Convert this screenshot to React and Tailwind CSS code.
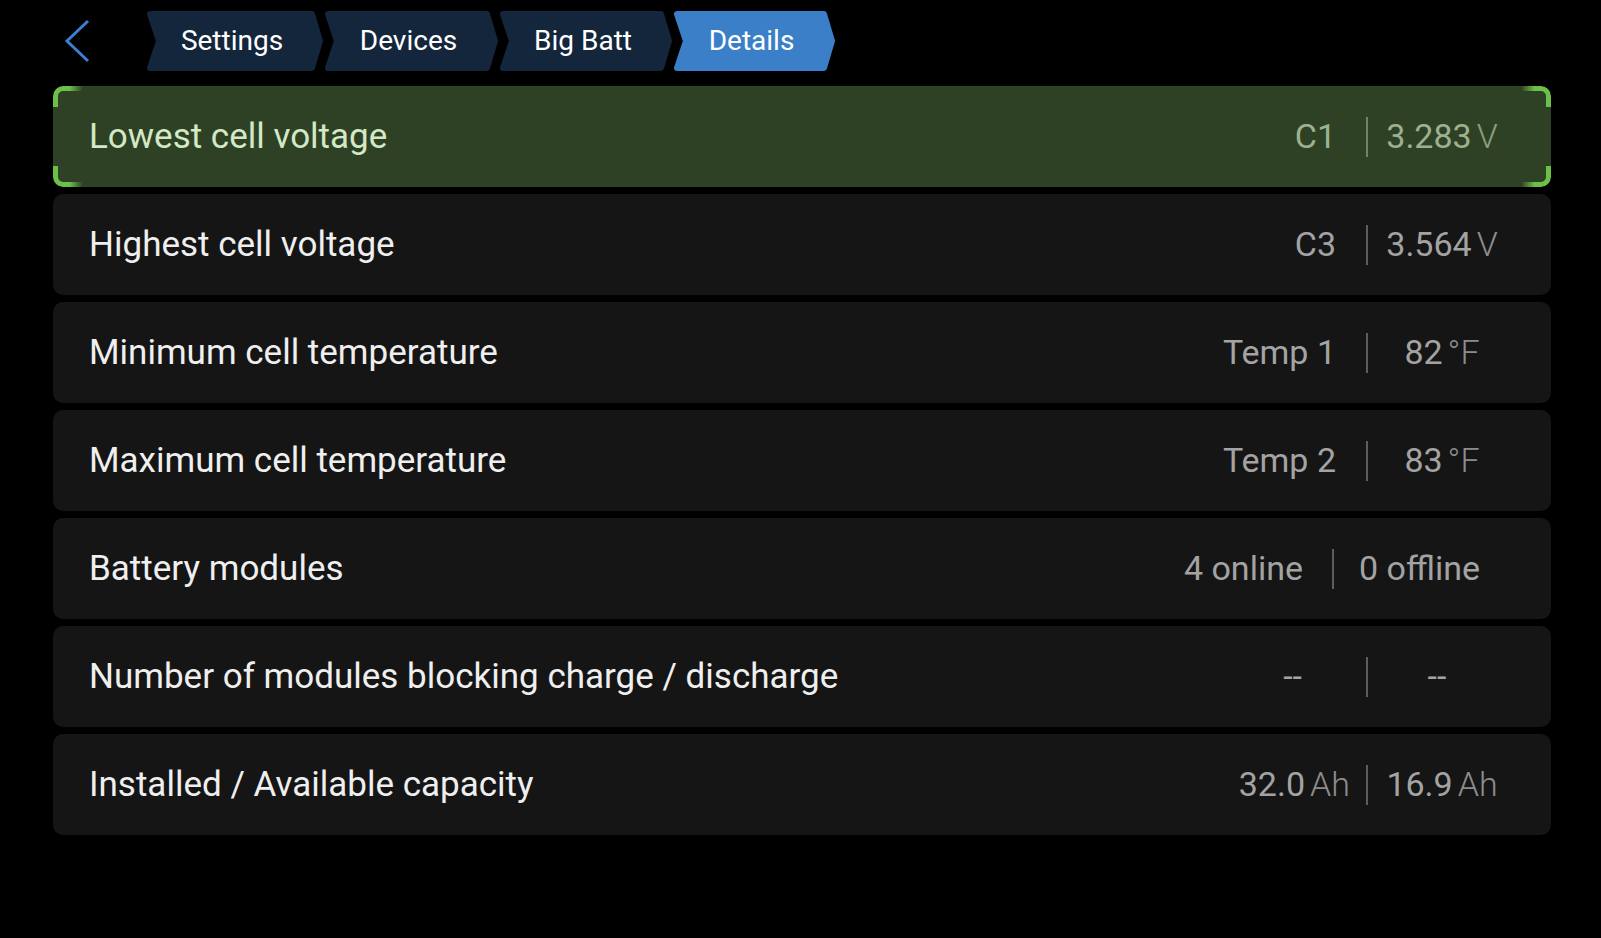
const crumbs = [
  { label: "Settings", w: 176 },
  { label: "Devices", w: 173 },
  { label: "Big Batt", w: 172 },
  { label: "Details", w: 161, active: true },
];

const rows = [
  { label: "Lowest cell voltage", left: "C1", right: "3.283", unit: "V", leftPad: "pr-[30px]", rightBox: "w-[148px] text-center", active: true },
  { label: "Highest cell voltage", left: "C3", right: "3.564", unit: "V", leftPad: "pr-[30px]", rightBox: "w-[148px] text-center" },
  { label: "Minimum cell temperature", left: "Temp 1", right: "82", unit: "°F", leftPad: "pr-[30px]", rightBox: "w-[148px] text-center" },
  { label: "Maximum cell temperature", left: "Temp 2", right: "83", unit: "°F", leftPad: "pr-[30px]", rightBox: "w-[148px] text-center" },
  { label: "Battery modules", left: "4 online", right: "0 offline", leftPad: "pr-[29px]", rightBox: "w-[182px] text-left pl-[25px]" },
  { label: "Number of modules blocking charge / discharge", left: "--", right: "--", leftPad: "pr-[64px]", rightBox: "w-[148px] text-center pr-[10px]" },
  { label: "Installed / Available capacity", left: "32.0", leftUnit: "Ah", right: "16.9", unit: "Ah", leftPad: "pr-[16px]", rightBox: "w-[148px] text-center" },
];

function Crumb({ label, w, active }) {
  const d = 10;
  const fill = active ? "#3b7fc8" : "#14263c";
  const pts = `3,3 ${w - d - 1},3 ${w - 3},30 ${w - d - 1},57 3,57 ${d + 2},30`;
  return (
    <div className="relative h-[60px] flex items-center shrink-0" style={{ width: w }}>
      <svg className="absolute inset-0" width={w} height="60" viewBox={`0 0 ${w} 60`}>
        <polygon points={pts} fill={fill} stroke={fill} strokeWidth="6" strokeLinejoin="round" />
      </svg>
      <span className="relative w-full pl-[33px] pr-[39px] text-center text-[28px] text-white leading-none">
        {label}
      </span>
    </div>
  );
}

function Bracket({ pos }) {
  const base = "absolute w-[30px] h-[21px] border-[#6cc04a]";
  const cls = {
    tl: "left-0 top-0 border-l-[5px] border-t-[5px] rounded-tl-[10px] [mask-image:linear-gradient(to_right,black_55%,transparent)]",
    bl: "left-0 bottom-0 border-l-[5px] border-b-[5px] rounded-bl-[10px] [mask-image:linear-gradient(to_right,black_55%,transparent)]",
    tr: "right-0 top-0 border-r-[5px] border-t-[5px] rounded-tr-[10px] [mask-image:linear-gradient(to_left,black_55%,transparent)]",
    br: "right-0 bottom-0 border-r-[5px] border-b-[5px] rounded-br-[10px] [mask-image:linear-gradient(to_left,black_55%,transparent)]",
  }[pos];
  return <div className={`${base} ${cls}`} />;
}

function Row({ row }) {
  const a = row.active;
  const valColor = a ? "text-[#9cb190]" : "text-[#a3a3a3]";
  const unitColor = a ? "text-[#8a9f7e]" : "text-[#8c8c8c]";
  return (
    <div
      className={`relative h-[101px] rounded-[10px] flex items-center justify-between pl-[36px] pr-[35px] ${
        a ? "bg-[#2f4124]" : "bg-[#151515]"
      }`}
    >
      {a && (
        <>
          <Bracket pos="tl" />
          <Bracket pos="bl" />
          <Bracket pos="tr" />
          <Bracket pos="br" />
        </>
      )}
      <span className={`mt-[2px] text-[35px] ${a ? "text-[#d3e8c6]" : "text-[#efefef]"}`}>{row.label}</span>
      <div className="flex items-center text-[34px]">
        <span className={`${row.leftPad} ${valColor}`}>
          {row.left}
          {row.leftUnit && <span className={`ml-[5px] font-light ${unitColor}`}>{row.leftUnit}</span>}
        </span>
        <div className={`w-[2px] h-[40px] ${a ? "bg-[#6f8464]" : "bg-[#5c5c5c]"}`} />
        <span className={`${row.rightBox} ${valColor}`}>
          {row.right}
          {row.unit && <span className={`ml-[5px] font-light ${unitColor}`}>{row.unit}</span>}
        </span>
      </div>
    </div>
  );
}

export default function App() {
  return (
    <div className="min-h-screen bg-black font-[Roboto,sans-serif] pl-[53px] pr-[50px]">
      <div className="flex items-center h-[86px] pb-[4px]">
        <svg className="ml-[11px] shrink-0" width="26" height="44" viewBox="0 0 26 44">
          <polyline points="24,2 3,22 24,42" fill="none" stroke="#3b7fd0" strokeWidth="3" />
        </svg>
        <div className="flex gap-[2px] ml-[57px]">
          {crumbs.map((c) => (
            <Crumb key={c.label} {...c} />
          ))}
        </div>
      </div>
      <div className="flex flex-col gap-[7px]">
        {rows.map((r) => (
          <Row key={r.label} row={r} />
        ))}
      </div>
    </div>
  );
}
